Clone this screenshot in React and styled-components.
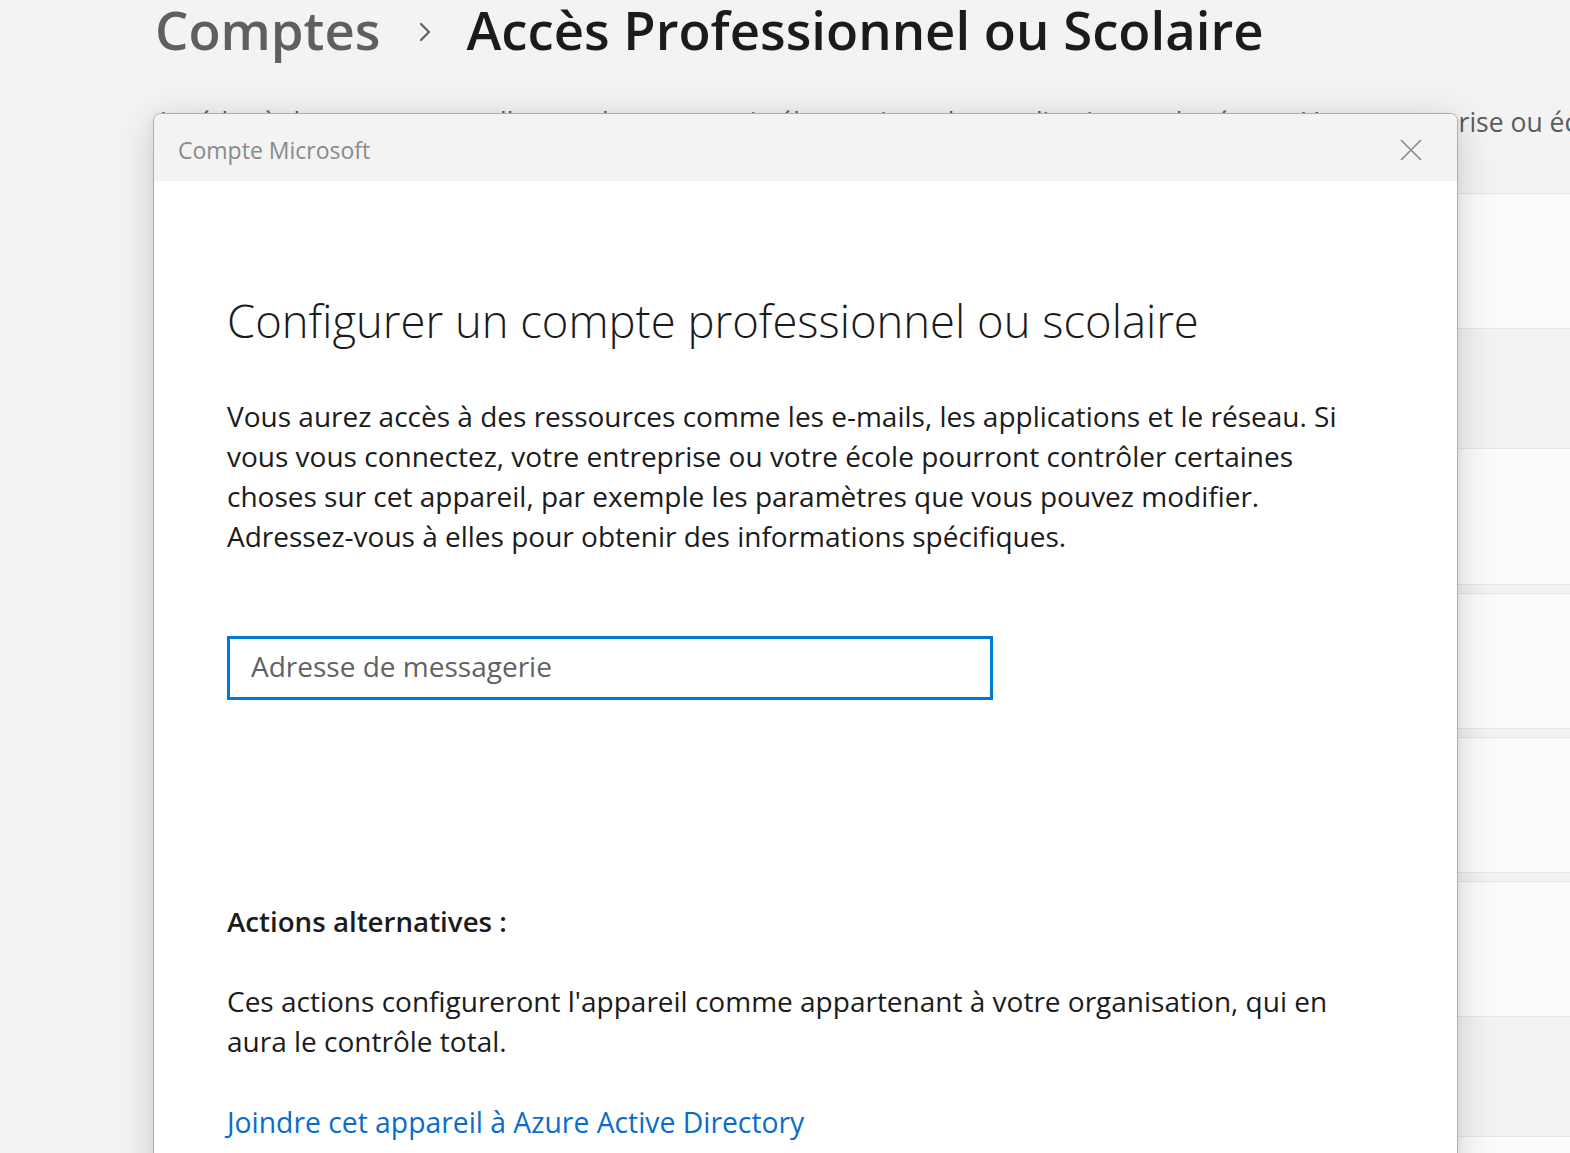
import React from "react";
import styled, { createGlobalStyle } from "styled-components";

const GlobalStyle = createGlobalStyle`
  html, body { margin: 0; padding: 0; }
  body {
    font-family: "Open Sans", "Noto Sans", "Liberation Sans", sans-serif;
    background: #f3f3f3;
    color: #1b1b1b;
  }
  * { box-sizing: border-box; }
`;

const Page = styled.div`
  position: relative;
  width: 100%;
  height: 100vh;
  overflow: hidden;
  background: #f3f3f3;
`;

const Content = styled.main`
  display: flex;
  flex-direction: column;
  padding-left: 155px;
`;

const Breadcrumb = styled.nav`
  display: flex;
  align-items: center;
  height: 60px;
  white-space: nowrap;
`;

const Crumb = styled.span`
  font-size: 52.7px;
  font-weight: 600;
  line-height: 60px;
  color: ${(p) => (p.$muted ? "#5f5f5f" : "#1b1b1b")};
`;

const ChevronWrap = styled.span`
  display: flex;
  align-items: center;
  margin: 4px 34px 0 38px;
  color: #5f5f5f;
`;

const Description = styled.p`
  margin: 42px 0 0;
  font-size: 26.5px;
  line-height: 40px;
  color: #5c5c5c;
  white-space: nowrap;
`;

const CardStack = styled.section`
  display: flex;
  flex-direction: column;
  gap: 8px;
  margin-top: 51px;
  margin-right: -60px;
`;

const CardGroup = styled.div`
  display: flex;
  flex-direction: column;
  border: 1px solid #e5e5e5;
  border-radius: 6px;
  overflow: hidden;
`;

const CardRow = styled.div`
  height: ${(p) => p.$h}px;
  background: ${(p) => (p.$sub ? "#f3f3f3" : "#fbfbfb")};
  & + & { border-top: 1px solid #e5e5e5; }
`;

const Dialog = styled.div`
  position: absolute;
  left: 153px;
  top: 113px;
  width: 1305px;
  height: 1100px;
  display: flex;
  flex-direction: column;
  background: #ffffff;
  border: 1px solid #aeaeae;
  border-radius: 8px 8px 0 0;
  box-shadow: 0 8px 40px rgba(0, 0, 0, 0.16), 0 2px 10px rgba(0, 0, 0, 0.06);
  overflow: hidden;
`;

const DialogHeader = styled.header`
  display: flex;
  align-items: center;
  justify-content: space-between;
  height: 67px;
  padding: 4px 34px 0 24px;
  background: #f3f3f3;
`;

const DialogTitle = styled.span`
  font-size: 23px;
  color: #8a8a8a;
`;

const CloseButton = styled.button`
  display: flex;
  align-items: center;
  justify-content: center;
  width: 24px;
  height: 24px;
  padding: 0;
  border: none;
  background: transparent;
  color: #8c8c8c;
`;

const DialogBody = styled.div`
  display: flex;
  flex-direction: column;
  align-items: flex-start;
  padding: 111px 74px 0 73px;
`;

const Heading = styled.h1`
  margin: 0;
  font-size: 45.4px;
  font-weight: 300;
  line-height: 56px;
  color: #1b1b1b;
`;

const Text = styled.p`
  margin: ${(p) => p.$mt || 0}px 0 0;
  max-width: 1140px;
  font-size: 28px;
  line-height: 40px;
  color: #1b1b1b;
`;

const EmailInput = styled.input`
  margin-top: 80px;
  width: 766px;
  height: 64px;
  padding: 0 0 4px 21px;
  border: 3px solid #0078d4;
  border-radius: 0;
  outline: none;
  font-family: inherit;
  font-size: 28px;
  color: #1b1b1b;
  background: #fff;
  &::placeholder { color: #626262; }
`;

const SectionTitle = styled.h2`
  margin: 201px 0 0;
  font-size: 27.7px;
  font-weight: 600;
  line-height: 40px;
  color: #1b1b1b;
`;

const LinkText = styled.a`
  margin-top: 41px;
  font-size: 28.3px;
  line-height: 40px;
  color: #0a6ccd;
  text-decoration: none;
`;

const Chevron = () => (
  <svg width="14" height="22" viewBox="0 0 14 22" fill="none">
    <path d="M3 3 L11 11 L3 19" stroke="currentColor" strokeWidth="2.2" strokeLinecap="round" strokeLinejoin="round" />
  </svg>
);

const CloseIcon = () => (
  <svg width="24" height="24" viewBox="0 0 24 24" fill="none">
    <path d="M2 2 L22 22 M22 2 L2 22" stroke="currentColor" strokeWidth="1.7" />
  </svg>
);

export default function App() {
  return (
    <Page>
      <GlobalStyle />
      <Content>
        <Breadcrumb>
          <Crumb $muted>Comptes</Crumb>
          <ChevronWrap><Chevron /></ChevronWrap>
          <Crumb>Accès Professionnel ou Scolaire</Crumb>
        </Breadcrumb>
        <Description>
          Accédez à des ressources telles que la messagerie électronique, les applications et le réseau. Votre entreprise ou école peut contrôler certaines choses sur cet appareil.
        </Description>
        <CardStack>
          <CardGroup>
            <CardRow $h={134} />
            <CardRow $h={120} $sub />
            <CardRow $h={136} />
          </CardGroup>
          <CardGroup><CardRow $h={134} /></CardGroup>
          <CardGroup><CardRow $h={134} /></CardGroup>
          <CardGroup>
            <CardRow $h={134} />
            <CardRow $h={120} $sub />
            <CardRow $h={136} />
          </CardGroup>
        </CardStack>
      </Content>

      <Dialog role="dialog" aria-label="Compte Microsoft">
        <DialogHeader>
          <DialogTitle>Compte Microsoft</DialogTitle>
          <CloseButton aria-label="Fermer"><CloseIcon /></CloseButton>
        </DialogHeader>
        <DialogBody>
          <Heading>Configurer un compte professionnel ou scolaire</Heading>
          <Text $mt={48}>
            Vous aurez accès à des ressources comme les e-mails, les applications et le réseau. Si vous vous connectez, votre entreprise ou votre école pourront contrôler certaines choses sur cet appareil, par exemple les paramètres que vous pouvez modifier. Adressez-vous à elles pour obtenir des informations spécifiques.
          </Text>
          <EmailInput type="email" placeholder="Adresse de messagerie" />
          <SectionTitle>Actions alternatives :</SectionTitle>
          <Text $mt={40}>
            Ces actions configureront l'appareil comme appartenant à votre organisation, qui en aura le contrôle total.
          </Text>
          <LinkText href="#">Joindre cet appareil à Azure Active Directory</LinkText>
        </DialogBody>
      </Dialog>
    </Page>
  );
}
